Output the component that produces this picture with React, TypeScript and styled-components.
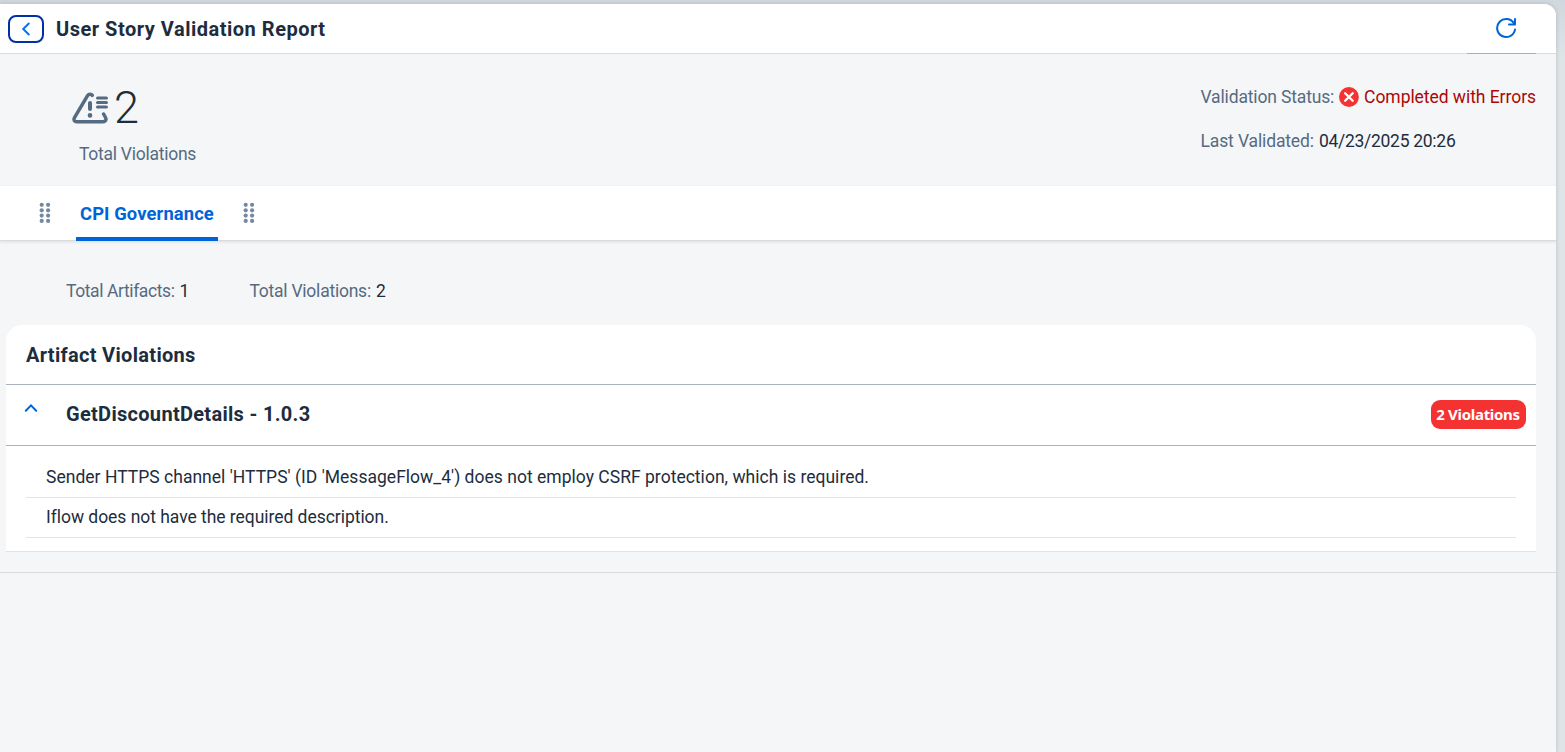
import React from 'react';
import styled, { createGlobalStyle } from 'styled-components';

const GlobalStyle = createGlobalStyle`
  * { box-sizing: border-box; }
  body {
    margin: 0;
    overflow: hidden;
    background: #dfe3e6;
    color: #1d2d3e;
    font: 400 17.5px/20px Roboto, "Liberation Sans", sans-serif;
  }
`;

const Frame = styled.div`
  height: 752px;
  padding: 4px 9px 0 0;
  background: linear-gradient(#d1d8dd, #dfe4e7 60px);
`;

const Shell = styled.main`
  height: 748px;
  overflow: hidden;
  border-radius: 0 12px 0 0;
  background: #f5f6f7;
  box-shadow: 0 0 4px rgba(34, 53, 72, 0.2);
`;

const Header = styled.header`
  display: flex;
  align-items: center;
  height: 50px;
  padding: 0 39px 0 8px;
  background: #fff;
  border-bottom: 1px solid #d9dbdd;
`;

const BackButton = styled.button`
  display: flex;
  align-items: center;
  justify-content: center;
  width: 36px;
  height: 28px;
  margin: 0 12px 0 0;
  padding: 0;
  border: 2px solid #0032a5;
  border-radius: 8px;
  background: #fff;
`;

const Title = styled.h1<{ $spacing?: number }>`
  margin: 0;
  font-size: 20px;
  line-height: 24px;
  font-weight: 700;
  letter-spacing: ${(p) => p.$spacing ?? 0}px;
  white-space: nowrap;
`;

const RefreshButton = styled.button`
  display: flex;
  margin: 0 0 2px auto;
  padding: 0;
  border: 0;
  background: none;
`;

const Summary = styled.section`
  display: flex;
  justify-content: space-between;
  height: 133px;
  padding: 0 20px 0 72px;
`;

const Metric = styled.div`
  padding-top: 29px;
`;

const MetricValue = styled.div`
  display: flex;
  align-items: center;
  gap: 5px;
  height: 50px;
  color: #1d2d3e;
  font-size: 45px;
  font-weight: 300;
  line-height: 50px;
`;

const MetricLabel = styled.div`
  padding: 11px 0 0 7px;
`;

const Status = styled.div`
  display: flex;
  flex-direction: column;
  gap: 24px;
  width: 336px;
  padding: 33px 0 0 0.5px;
`;

const StatusMarker = styled.div`
  width: 69px;
  height: 1px;
  margin: -1px 20px 0 auto;
  background: #a3b1bf;
  position: relative;
`;

const Field = styled.div`
  display: flex;
  align-items: center;
  gap: 5px;
  height: 20px;
`;

type Tone = 'label' | 'value' | 'error';
const tones: Record<Tone, string> = { label: '#556b82', value: '#1d2d3e', error: '#aa0808' };

const Text = styled.span<{ $tone: Tone; $spacing?: number }>`
  color: ${(p) => tones[p.$tone]};
  letter-spacing: ${(p) => p.$spacing ?? 0}px;
  white-space: nowrap;
`;

const Tabs = styled.nav`
  display: flex;
  align-items: flex-start;
  height: 55px;
  margin-top: -1px;
  padding-left: 39px;
  background: #fff;
  border-bottom: 1px solid #d9dbdd;
  box-shadow: 0 1px 3px rgba(34, 53, 72, 0.12);
`;

const Grip = styled.svg`
  margin-top: 16px;
`;

const Tab = styled.div`
  width: 142px;
  height: 55px;
  margin: 0 25px;
  padding: 18px 0 0 4px;
  border-bottom: 4px solid #0064d9;
  border-radius: 2px 2px 0 0;
  color: #0064d9;
  font-weight: 700;
  white-space: nowrap;
  letter-spacing: 0.1px;
  font-size: 18.4px;
`;

const Content = styled.section`
  height: 332px;
  padding: 0 20px 0 6px;
  border-bottom: 1px solid #d9dbdd;
`;

const Totals = styled.div`
  display: flex;
  gap: 60px;
  height: 84px;
  padding: 40px 0 0 60px;
`;

const Card = styled.div`
  height: 227px;
  border-radius: 16px 16px 0 0;
  border-bottom: 1px solid #e0e2e4;
  background: #fff;
`;

const CardHeader = styled.div`
  display: flex;
  align-items: center;
  height: 60px;
  padding: 0 20px;
  border-bottom: 1px solid #a8b3bd;
`;

const PanelHeader = styled.div`
  display: flex;
  align-items: center;
  height: 61px;
  padding: 0 10px 2px 18px;
  border-bottom: 1px solid #a8b3bd;
`;

const Collapse = styled.svg`
  margin: 0 28px 13px 0;
`;

const Badge = styled.span`
  width: 95px;
  height: 29px;
  margin-left: auto;
  padding-right: 1px;
  border-radius: 9px;
  background: #f53232;
  color: #fff;
  font: 700 15px/29px "Noto Sans", sans-serif;
  letter-spacing: -0.3px;
  text-align: center;
  white-space: nowrap;
`;

const Violations = styled.ul`
  margin: 0;
  padding: 12px 20px 0;
  list-style: none;
`;

const Violation = styled.li`
  height: 40px;
  padding: 9px 20px 0;
  border-bottom: 1px solid #e2e4e5;
`;

function DragGrip() {
  return (
    <Grip width="12" height="22" viewBox="0 0 12 22" fill="#7488a0">
      {[2.8, 8.3, 13.6, 18.9].map((y) => (
        <React.Fragment key={y}>
          <circle cx="2.7" cy={y} r="2.1" />
          <circle cx="9.1" cy={y} r="2.1" />
        </React.Fragment>
      ))}
    </Grip>
  );
}

function ViolationIcon() {
  return (
    <svg width="37" height="32" viewBox="0 0 37 32" fill="none" stroke="#556b82" strokeWidth="3.5" strokeLinecap="round" strokeLinejoin="round">
      <path d="M20.2 3.3C19.2 1.7 16.7 1.8 15.7 3.4L2.5 25.7C1.3 27.8 2.5 29.8 4.8 29.8H31C33.5 29.8 34.7 27.6 33.5 25.5L31.6 22" />
      <path d="M18 11V17" strokeWidth="4" />
      <path d="M25.6 6H34.4M25.6 10.5H34.4M25.6 15H34.4" strokeWidth="3.2" />
      <circle cx="18" cy="23.4" r="2.3" fill="#556b82" stroke="none" />
    </svg>
  );
}

export default function App() {
  return (
    <>
      <GlobalStyle />
      <Frame>
        <Shell>
          <Header>
            <BackButton aria-label="Back">
              <svg width="10" height="16" viewBox="0 0 10 16" fill="none" stroke="#0070f2" strokeWidth="1.9" strokeLinecap="round">
                <path d="M7.8 2.5L2.2 8L7.8 13.5" />
              </svg>
            </BackButton>
            <Title $spacing={0.51}>User Story Validation Report</Title>
            <RefreshButton aria-label="Refresh">
              <svg width="22" height="22" viewBox="0 0 22 22" fill="none" stroke="#0064d9" strokeWidth="2" strokeLinecap="round" strokeLinejoin="round">
                <path d="M20 12.6A9 9 0 1 1 19 6.6" />
                <path d="M20 2V7.5H14" />
              </svg>
            </RefreshButton>
          </Header>
          <StatusMarker />
          <Summary>
            <Metric>
              <MetricValue><ViolationIcon /><span>2</span></MetricValue>
              <MetricLabel><Text $tone="label" $spacing={-0.26}>Total Violations</Text></MetricLabel>
            </Metric>
            <Status>
              <Field>
                <Text $tone="label" $spacing={-0.15}>Validation Status:</Text>
                <svg width="20" height="20" viewBox="0 0 20 20">
                  <circle cx="10" cy="10" r="10" fill="#f53232" />
                  <path d="M6.2 6.2L13.8 13.8M13.8 6.2L6.2 13.8" stroke="#fff" strokeWidth="2.4" strokeLinecap="round" />
                </svg>
                <Text $tone="error" $spacing={-0.05}>Completed with Errors</Text>
              </Field>
              <Field>
                <Text $tone="label" $spacing={-0.13}>Last Validated:</Text>
                <Text $tone="value" $spacing={-0.28}>04/23/2025 20:26</Text>
              </Field>
            </Status>
          </Summary>
          <Tabs>
            <DragGrip />
            <Tab>CPI Governance</Tab>
            <DragGrip />
          </Tabs>
          <Content>
            <Totals>
              <Field>
                <Text $tone="label" $spacing={-0.4}>Total Artifacts:</Text>
                <Text $tone="value">1</Text>
              </Field>
              <Field>
                <Text $tone="label" $spacing={-0.23}>Total Violations:</Text>
                <Text $tone="value">2</Text>
              </Field>
            </Totals>
            <Card>
              <CardHeader><Title as="h2" $spacing={0.31}>Artifact Violations</Title></CardHeader>
              <PanelHeader>
                <Collapse width="14" height="10" viewBox="0 0 14 10" fill="none" stroke="#0064d9" strokeWidth="2" strokeLinecap="round">
                  <path d="M1.8 7.8L7 2.4L12.2 7.8" />
                </Collapse>
                <Title as="h3" $spacing={0.3}>GetDiscountDetails - 1.0.3</Title>
                <Badge>2 Violations</Badge>
              </PanelHeader>
              <Violations>
                <Violation><Text $tone="value" $spacing={0.02}>Sender HTTPS channel 'HTTPS' (ID 'MessageFlow_4') does not employ CSRF protection, which is required.</Text></Violation>
                <Violation><Text $tone="value" $spacing={-0.04}>Iflow does not have the required description.</Text></Violation>
              </Violations>
            </Card>
          </Content>
        </Shell>
      </Frame>
    </>
  );
}
